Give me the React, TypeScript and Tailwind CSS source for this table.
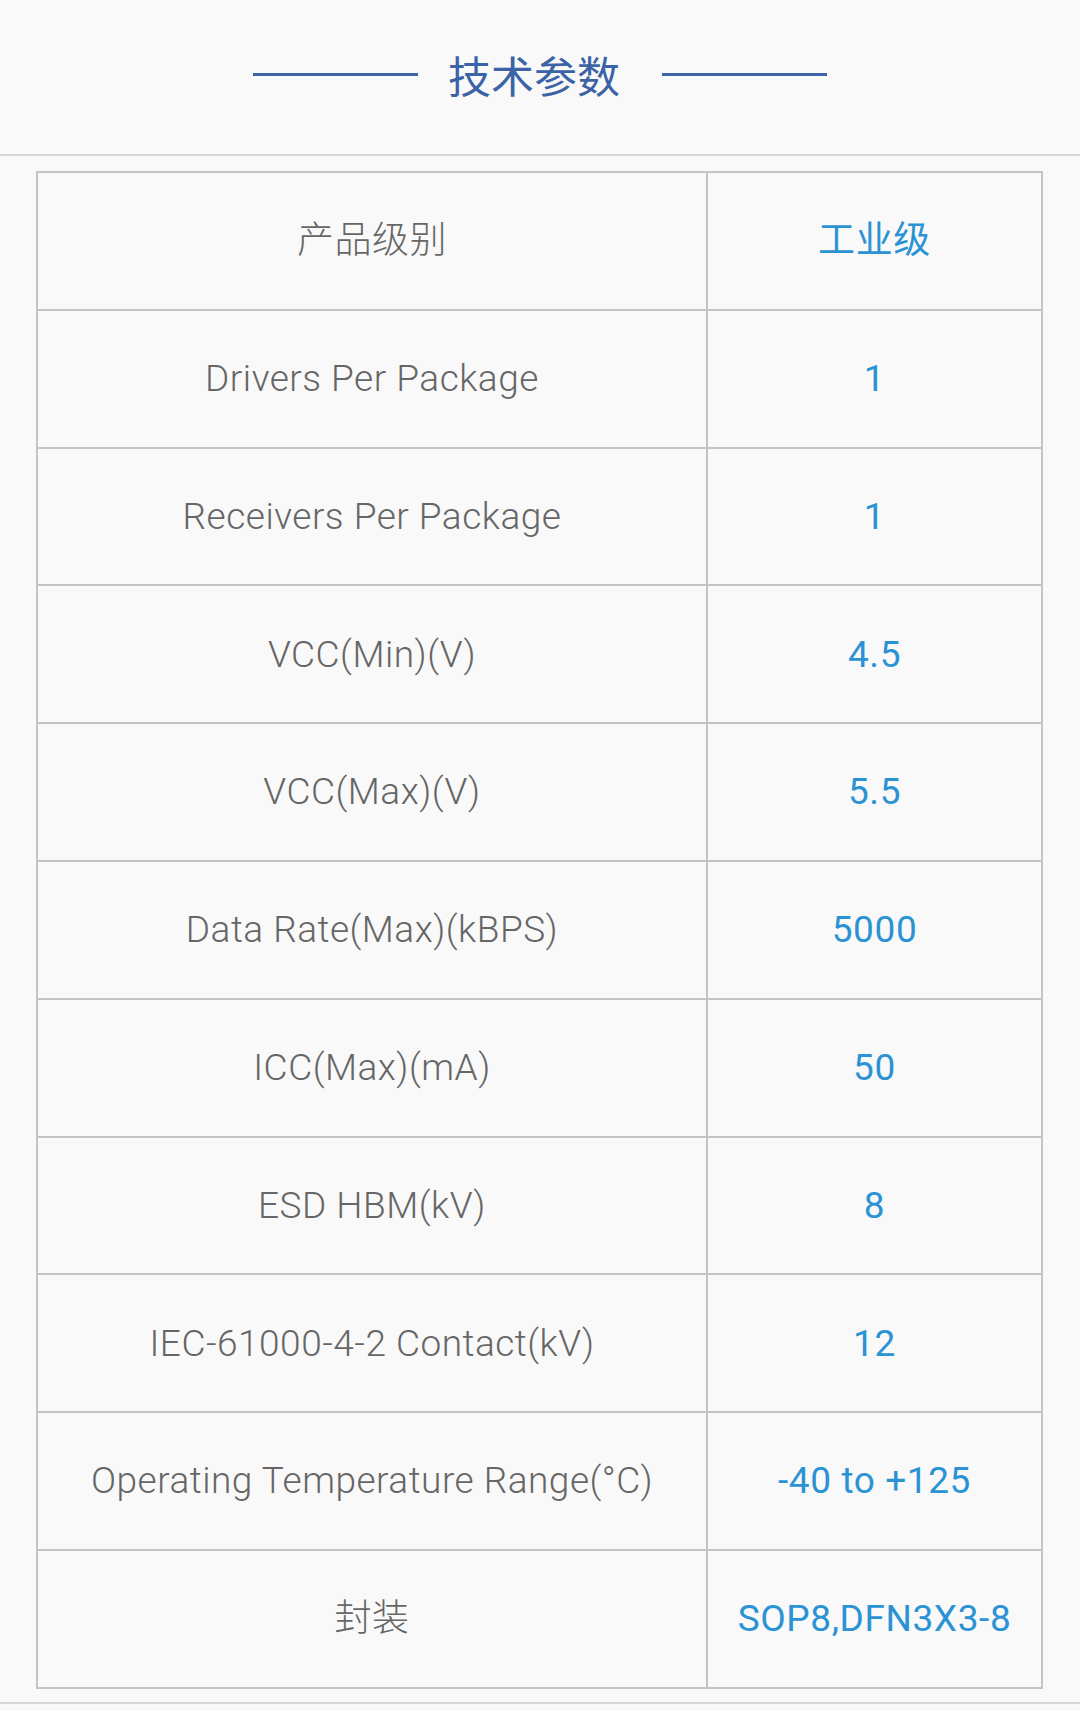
import React from "react";

const rows: [string, string][] = [
  ["产品级别", "工业级"],
  ["Drivers Per Package", "1"],
  ["Receivers Per Package", "1"],
  ["VCC(Min)(V)", "4.5"],
  ["VCC(Max)(V)", "5.5"],
  ["Data Rate(Max)(kBPS)", "5000"],
  ["ICC(Max)(mA)", "50"],
  ["ESD HBM(kV)", "8"],
  ["IEC-61000-4-2 Contact(kV)", "12"],
  ["Operating Temperature Range(°C)", "-40 to +125"],
  ["封装", "SOP8,DFN3X3-8"],
];

export default function App() {
  return (
    <div
      className="w-[1080px] h-[1711px] bg-[#f9f9f9] overflow-hidden"
      style={{ fontFamily: 'Roboto, "Noto Sans CJK SC", sans-serif' }}
    >
      <div className="h-[156px] border-b-2 border-[#d6d6d6] flex items-center justify-center pb-[6px]">
        <div className="flex items-center">
          <div className="w-[165px] h-[3px] bg-[#3b63a6]" />
          <div
            className="ml-[30px] mr-[42px] text-[43px] leading-none text-[#3b63a6]"
            style={{ fontFamily: '"Noto Sans CJK SC", sans-serif' }}
          >
            技术参数
          </div>
          <div className="w-[165px] h-[3px] bg-[#3b63a6]" />
        </div>
      </div>
      <div className="pt-[15px] pl-[36px] pr-[37px]">
        <div className="border-2 border-b-0 border-[#c4c4c4]">
          {rows.map(([k, v], i) => (
            <div key={i} className="flex h-[137.8px] border-b-2 border-[#c4c4c4]">
              <div className="w-[670px] border-r-2 border-[#c4c4c4] flex items-center justify-center text-[37px] tracking-[0.5px] text-[#666666] font-light">
                {k}
              </div>
              <div className="flex-1 flex items-center justify-center text-[37px] tracking-[0.6px] text-[#2b93d3]">
                {v}
              </div>
            </div>
          ))}
        </div>
      </div>
      <div className="mt-[13px] border-t-2 border-[#d6d6d6]" />
    </div>
  );
}
